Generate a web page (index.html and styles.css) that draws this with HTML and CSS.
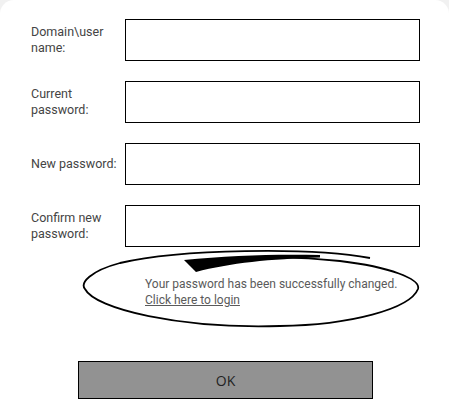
FILE: index.html
```html
<!DOCTYPE html>
<html lang="en">
<head>
  <meta charset="UTF-8" />
  <title>Change password</title>
  <meta name="viewport" content="width=device-width, initial-scale=1.0" />
  <link rel="stylesheet" href="styles.css">
</head>
<body>
  <div class="card">
    <form class="form">
      <div class="row">
        <label for="user">Domain\user name:</label>
        <input type="text" id="user" />
      </div>
      <div class="row">
        <label for="current">Current password:</label>
        <input type="password" id="current" />
      </div>
      <div class="row">
        <label for="newpw">New password:</label>
        <input type="password" id="newpw" />
      </div>
      <div class="row">
        <label for="confirm">Confirm new password:</label>
        <input type="password" id="confirm" />
      </div>
    </form>

    <div class="notice">
      <svg class="scribble" viewBox="0 0 344 80" width="344" height="80">
        <path d="M290 9 C230 -2, 100 0, 40 14 C10 22, 0 34, 5 40 C15 60, 100 80, 200 77 C270 76, 330 60, 338 40 C341 30, 310 18, 260 12 C230 9, 205 8, 187 9"
              fill="none" stroke="#000" stroke-width="1.8" />
        <path d="M104 11 C150 6, 200 5, 240 6 L240 8.5 C190 10, 150 14, 116 23 Z" fill="#000" />
      </svg>
      <p class="msg">Your password has been successfully changed.<br><a href="#">Click here to login</a></p>
    </div>

    <div class="actions">
      <button type="button" class="ok">OK</button>
    </div>
  </div>
</body>
</html>
```

FILE: styles.css
```css
body {
  margin: 0;
  background: #f1f1f1;
  font-family: Roboto, "Liberation Sans", sans-serif;
  color: #444;
}
.card {
  background: #fff;
  width: 449px;
  height: 416px;
  border-radius: 14px 14px 0 0;
  overflow: hidden;
}
.form {
  padding: 19px 0 0 31px;
  display: flex;
  flex-direction: column;
  gap: 20px;
}
.row {
  display: flex;
  align-items: center;
  height: 42px;
}
.row label {
  flex: 0 0 94px;
  font-size: 12.5px;
  line-height: 16px;
  color: #444;
  padding-right: 4px;
  box-sizing: border-box;
}
.row input {
  flex: 0 0 295px;
  height: 42px;
  box-sizing: border-box;
  border: 1px solid #000;
  margin: 0;
  padding: 0 6px;
  font-size: 12px;
}
.notice {
  position: relative;
  margin: 2px 0 0 80px;
  width: 344px;
  height: 78px;
}
.scribble {
  position: absolute;
  left: 0;
  top: 0;
}
.msg {
  margin: 0;
  padding: 27px 0 0 65px;
  font-size: 12px;
  line-height: 16px;
  color: #5a5a5a;
}
.msg a {
  color: #5a5a5a;
}
.actions {
  padding: 34px 0 0 78px;
}
.ok {
  width: 295px;
  height: 38px;
  background: #929292;
  border: 1px solid #000;
  font-family: "Open Sans", sans-serif;
  font-size: 14px;
  color: #222;
  cursor: pointer;
}
```
